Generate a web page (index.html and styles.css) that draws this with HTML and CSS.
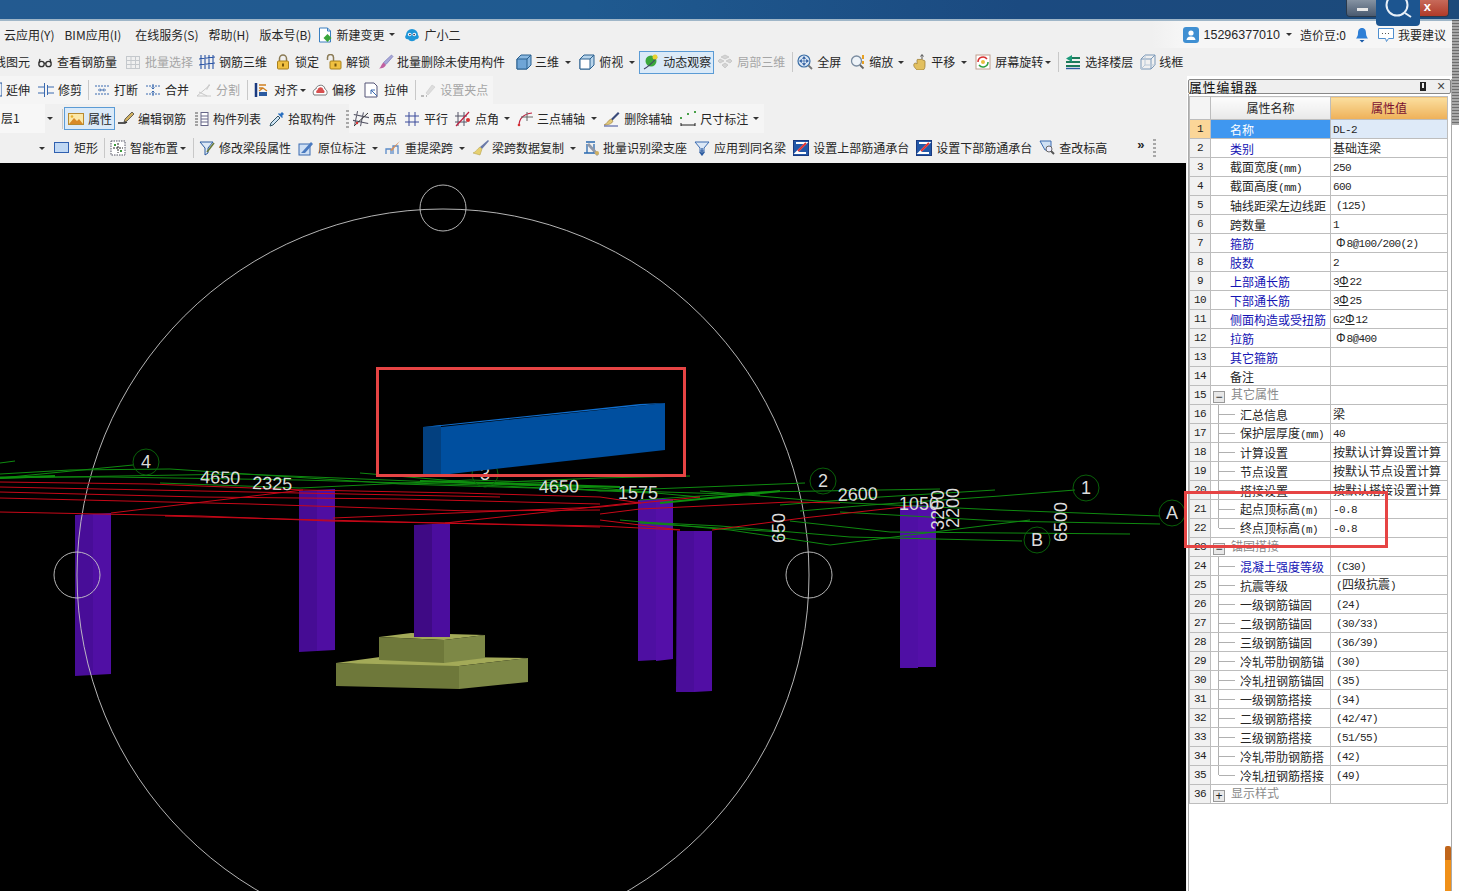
FILE: index.html
```html
<!DOCTYPE html>
<html lang="zh-CN">
<head>
<meta charset="utf-8">
<title>属性编辑器</title>
<link rel="stylesheet" href="styles.css">
</head>
<body>
<svg class="defs" aria-hidden="true">
  <symbol id="i-doc" viewBox="0 0 16 16"><path d="M2.500 1h8l3 3v11h-11z" fill="#fff" stroke="#3a7fc0"/><path d="M10.500 1v3h3" fill="none" stroke="#3a7fc0"/><path d="M10.500 7l4 4-4 4-4-4z" fill="#3aa53a"/></symbol>
  <symbol id="i-bot" viewBox="0 0 16 16"><path d="M2 8a6 6 0 0 1 12 0c2 2 0 5-2 4-2 3-6 3-8 0-2 1-4-2-2-4z" fill="#1f96d8"/><circle cx="5.700" cy="7.500" r="1.800" fill="#fff"/><circle cx="10.300" cy="7.500" r="1.800" fill="#fff"/><circle cx="5.900" cy="7.600" r=".8" fill="#113"/><circle cx="10.100" cy="7.600" r=".8" fill="#113"/></symbol>
  <symbol id="i-user" viewBox="0 0 16 16"><rect width="16" height="16" rx="3" fill="#3f8fd2"/><circle cx="8" cy="6" r="2.600" fill="#fff"/><path d="M3.500 13c.5-3 2.500-3.500 4.500-3.500s4 .5 4.500 3.500z" fill="#fff"/></symbol>
  <symbol id="i-bell" viewBox="0 0 16 16"><path d="M8 1c3 0 4 2.500 4 5 0 3 1 4 2 5.500H2C3 10 4 9 4 6c0-2.500 1-5 4-5z" fill="#2e7fd6"/><path d="M5.500 13h5L8 15.500z" fill="#1a5aa8"/></symbol>
  <symbol id="i-chat" viewBox="0 0 16 16"><path d="M.5 1.500h15v10h-5l-2 3-1-3h-7z" fill="#fff" stroke="#4f8fd0"/><path d="M4 6.500h8" stroke="#555" stroke-dasharray="1 2"/></symbol>
  <symbol id="i-glass" viewBox="0 0 16 16"><g fill="none" stroke="#333" stroke-width="1.300"><circle cx="4.500" cy="10" r="2.700"/><circle cx="11.500" cy="10" r="2.700"/><path d="M7 9.500c.7-.6 1.300-.6 2 0M2 9l1-4M14 9l-1-4"/></g></symbol>
  <symbol id="i-gridg" viewBox="0 0 16 16"><g fill="none" stroke="#c4c8cc"><rect x="1.500" y="2.500" width="13" height="12"/><path d="M1.500 6.500h13M1.500 10.500h13M6 2.500v12M10.500 2.500v12"/></g></symbol>
  <symbol id="i-rebar" viewBox="0 0 16 16"><g fill="none" stroke="#2b55a5" stroke-width="1.100"><path d="M2 1v14M6 1v14M10 1v14M14 1v14M0 5l16-2M0 11l16-2"/></g></symbol>
  <symbol id="i-lock" viewBox="0 0 16 16"><path d="M4.500 7V4.500a3.500 3.500 0 0 1 7 0V7" fill="none" stroke="#8a7a55" stroke-width="1.500"/><rect x="2.500" y="7" width="11" height="8" rx="1" fill="#f0c040" stroke="#a8801c"/><rect x="7" y="9.500" width="2" height="3" fill="#75550c"/></symbol>
  <symbol id="i-unlock" viewBox="0 0 16 16"><path d="M1.500 6V3.500a3 3 0 0 1 6 0V7" fill="none" stroke="#8a7a55" stroke-width="1.500"/><rect x="4" y="7" width="11" height="8" rx="1" fill="#f0c040" stroke="#a8801c"/><rect x="8.500" y="9.500" width="2" height="3" fill="#75550c"/></symbol>
  <symbol id="i-brush" viewBox="0 0 16 16"><path d="M13.500 1l1.500 1.500-7 8-2.500-2z" fill="#a8a8d8" stroke="#6a6ab0" stroke-width=".6"/><path d="M5.500 8.500l2.500 2.500c-1 2.500-4 3.500-7 3.500 2-1 2-4 4.500-6z" fill="#c060a0"/></symbol>
  <symbol id="i-cube" viewBox="0 0 16 16"><path d="M1 5l4-4h10v10l-4 4H1z" fill="#8ab8e0" stroke="#2a6090"/><path d="M1 5h10v10H1z" fill="#6fa5d6" stroke="#2a6090"/><path d="M11 5l4-4" stroke="#2a6090"/></symbol>
  <symbol id="i-cubew" viewBox="0 0 16 16"><path d="M1 5l4-4h10v10l-4 4H1z" fill="#b8d4ea" stroke="#2a6090"/><path d="M1 5h10v10H1z" fill="#fff" stroke="#2a6090"/><path d="M11 5l4-4" stroke="#2a6090"/></symbol>
  <symbol id="i-orbit" viewBox="0 0 16 16"><circle cx="8" cy="7" r="5.500" fill="#3ca83c"/><path d="M1 15c2-1 9-6 13-12" fill="none" stroke="#446" stroke-width="1.200"/><circle cx="12" cy="3" r="2.500" fill="#e8d030"/></symbol>
  <symbol id="i-part" viewBox="0 0 16 16"><g fill="#d4d4d4" stroke="#bbb" stroke-width=".6"><path d="M8 1l4 2-4 2-4-2zM3 5l4 2-4 2-2-2zM13 5l2 2-2 2-4-2zM8 9l3 2-3 3-3-3z"/></g></symbol>
  <symbol id="i-full" viewBox="0 0 16 16"><circle cx="7" cy="7" r="6" fill="#dce8f6" stroke="#3b6ea5" stroke-width="1.200"/><path d="M7 3v8M3 7h8M7 2.500l-1.500 2h3zM7 11.500l-1.500-2h3zM2.500 7l2-1.500v3zM11.500 7l-2-1.500v3z" fill="#2a5aa0" stroke="#2a5aa0" stroke-width=".6"/><path d="M11.500 11.500L15 15" stroke="#777" stroke-width="1.800"/></symbol>
  <symbol id="i-zoom" viewBox="0 0 16 16"><circle cx="6.500" cy="7" r="5" fill="#eef3f8" stroke="#7a8ca0" stroke-width="1.300"/><path d="M10 11l3.500 3.500" stroke="#666" stroke-width="1.800"/><path d="M13 1v4M13 7v3" stroke="#e8a020" stroke-width="2"/></symbol>
  <symbol id="i-pan" viewBox="0 0 16 16"><path d="M5 16c-2-2-4-4-3-6s3 0 3 0V6c0-1 2-1 2 0 0-1 2-1 2 0 0-1 2-1 2 .5 1-.5 2 0 2 1V12c0 2-1 4-2 4z" fill="#e2c060" stroke="#94742c" stroke-width=".7"/><path d="M10 1v4M8.500 2.500L10 .5l1.500 2" fill="none" stroke="#555"/></symbol>
  <symbol id="i-rot" viewBox="0 0 16 16"><rect x="1" y="1" width="14" height="14" fill="#fff" stroke="#c0a090"/><path d="M3 8a5 5 0 0 1 9-3" fill="none" stroke="#d83030" stroke-width="1.500"/><path d="M13 8a5 5 0 0 1-9 3" fill="none" stroke="#30a040" stroke-width="1.500"/><circle cx="8" cy="8" r="2" fill="#e8c040"/></symbol>
  <symbol id="i-floor" viewBox="0 0 16 16"><path d="M5 4h10M1 8h14M1 12h14" stroke="#1c7a5a" stroke-width="2"/><path d="M7 1L1 4.500 7 8z" fill="#1c9a7a"/><path d="M1 14.500h14" stroke="#2a5aa0" stroke-width="1.400"/></symbol>
  <symbol id="i-wire" viewBox="0 0 16 16"><g fill="none" stroke="#7a98b8"><path d="M1 5h10v10H1zM1 5l4-4h10v10l-4 4M11 5l4-4"/><path d="M5 1v10h10M5 11l-4 4" stroke="#b8c8d8"/></g></symbol>
  <symbol id="i-ext" viewBox="0 0 16 16"><rect x="13" y="1" width="3" height="13" fill="#e8eef6" stroke="#2a5aa0"/></symbol>
  <symbol id="i-trim" viewBox="0 0 16 16"><path d="M0 5h6M0 11h6M10 5h6M10 11h6" stroke="#3a6ab0"/><path d="M6.500 1v14M9.500 3v10" stroke="#3a6ab0"/></symbol>
  <symbol id="i-brk" viewBox="0 0 16 16"><path d="M1 4h14M1 12h14" stroke="#3a6ab0" stroke-dasharray="2 1"/><path d="M4 8h3M9 8h3M6 6.500L7.500 8 6 9.500M10 6.500L8.500 8 10 9.500" fill="none" stroke="#3a6ab0"/></symbol>
  <symbol id="i-mrg" viewBox="0 0 16 16"><path d="M1 4h14M1 12h14" stroke="#3a6ab0" stroke-dasharray="2 1"/><path d="M8 7V2M8 9v5M6.500 5.500L8 7l1.500-1.500M6.500 10.500L8 9l1.500 1.500" fill="none" stroke="#3a6ab0"/></symbol>
  <symbol id="i-spl" viewBox="0 0 16 16"><path d="M1 14L14 3M1 14h14M3 10l8 4" fill="none" stroke="#c8c8c8"/><path d="M10 7l3-5 1 1-3 5z" fill="#ccc"/></symbol>
  <symbol id="i-ali" viewBox="0 0 16 16"><path d="M2 1v14" stroke="#1a3a80" stroke-width="2.500"/><path d="M5 3h7M5 6h4M5 9l4-3 4 3" fill="none" stroke="#d08020" stroke-width="1.300"/><rect x="5" y="10" width="8" height="4" fill="#2a5aa0"/></symbol>
  <symbol id="i-off" viewBox="0 0 16 16"><path d="M2 13c-2-3 0-6 2-6 0-4 8-6 9 0 2 1 3 4 1 6z" fill="#fff" stroke="#777"/><path d="M4.500 11c-1-2 .5-3 1-3 .5-3 5-4 6 0 1 .5 1.500 2 .5 3z" fill="#d85050"/></symbol>
  <symbol id="i-str" viewBox="0 0 16 16"><path d="M1 1h9l3 3v11H1z" fill="#fff" stroke="#557"/><path d="M7 8l6 6M7 12V8h4" fill="none" stroke="#3a6ab0"/></symbol>
  <symbol id="i-grip2" viewBox="0 0 16 16"><path d="M12 3l3 2-7 8-2-2z" fill="#ddd" stroke="#c4c4c4" stroke-width=".5"/><path d="M1 14h3M6 14h1" stroke="#bbb" stroke-width="2"/></symbol>
  <symbol id="i-attr" viewBox="0 0 16 16"><rect x=".5" y="2.500" width="15" height="11" fill="#fbe8a8" stroke="#b88a30"/><path d="M1 13l5-6 3 3 2-2 4 5z" fill="#d88a28"/><circle cx="4" cy="5.500" r="1.300" fill="#e8b030"/></symbol>
  <symbol id="i-edit" viewBox="0 0 16 16"><path d="M0 12h7l2-1" fill="none" stroke="#222" stroke-width="1.300"/><path d="M14 1l2 2-7 7-3 1 1-3z" fill="#d0b060" stroke="#333" stroke-width=".7"/></symbol>
  <symbol id="i-list" viewBox="0 0 16 16"><path d="M1 2h3M1 5h3M1 8h3M1 11h3M1 14h3" stroke="#888" stroke-width="1.400"/><rect x="7" y="1.500" width="7" height="13" fill="#fff" stroke="#668"/><path d="M7 5h7M7 8h7M7 11h7" stroke="#668"/></symbol>
  <symbol id="i-pick" viewBox="0 0 16 16"><path d="M1 15l1-3 7-7 2 2-7 7z" fill="#cfe4f4" stroke="#356"/><path d="M9 3l4 4 1-1-1-1 2-2-2-2-2 2-1-1z" fill="#2a70c0"/></symbol>
  <symbol id="i-two" viewBox="0 0 16 16"><path d="M3 1v14M9 1v14M0 5h16M0 11h16" stroke="#556" transform="rotate(12 8 8)"/><path d="M1 15L15 2" stroke="#333"/><circle cx="4" cy="12" r="1.200" fill="#d83030"/></symbol>
  <symbol id="i-par" viewBox="0 0 16 16"><path d="M5 1v14M11 1v14M1 5h14M1 11h14" stroke="#3a4a9a"/></symbol>
  <symbol id="i-ang" viewBox="0 0 16 16"><path d="M3 1v14M9 1v14M0 5h12M0 11h12" stroke="#556"/><path d="M1 15L14 1" stroke="#c02040" stroke-width="1.200"/><circle cx="13" cy="9" r="2" fill="#d83030"/></symbol>
  <symbol id="i-arc" viewBox="0 0 16 16"><path d="M2 15C2 7 7 3 15 2" fill="none" stroke="#c02040" stroke-width="1.200"/><path d="M10 1v9M4 6h12" stroke="#666"/><circle cx="2" cy="14" r="1.300" fill="#d83030"/></symbol>
  <symbol id="i-del" viewBox="0 0 16 16"><path d="M14 1l1.500 1.500-7 7L7 8z" fill="#3a4a7a"/><path d="M7 8l2 2c-1 3-5 4-9 4 3-1 4-5 7-6z" fill="#e0c878" stroke="#8a6a2a" stroke-width=".5"/><path d="M0 15h14" stroke="#3a4a9a"/></symbol>
  <symbol id="i-dim" viewBox="0 0 16 16"><path d="M1 12v3M15 12v3M1 14h14" stroke="#222"/><rect x="0" y="6" width="2" height="2" fill="#48a048"/><rect x="7" y="2" width="2" height="2" fill="#48a048"/><rect x="14" y="0" width="2" height="2" fill="#48a048"/></symbol>
  <symbol id="i-rect" viewBox="0 0 16 16"><rect x=".5" y="2.500" width="14" height="10" fill="#c0d8f4" stroke="#3060b0"/></symbol>
  <symbol id="i-smart" viewBox="0 0 16 16"><rect x="1" y="1" width="14" height="14" fill="#fff" stroke="#556" stroke-dasharray="1.500 1"/><path d="M8 3v10M3 8h10" stroke="#222" stroke-dasharray="2 1"/><path d="M4 4h2v2H4zM10 10h2v2h-2z" fill="#3a9a3a"/></symbol>
  <symbol id="i-mod" viewBox="0 0 16 16"><path d="M1 2h13L9 8v5l-3 2V8z" fill="#dce8f6" stroke="#2a5aa0"/><path d="M15 3L8 12" stroke="#6a7a3a" stroke-width="1.600"/></symbol>
  <symbol id="i-org" viewBox="0 0 16 16"><rect x="1" y="4" width="11" height="11" fill="#cfe0f4" stroke="#3a6ab0"/><path d="M3 13l2-2 8-9 2 2-8 9z" fill="#4a7ac0"/></symbol>
  <symbol id="i-re" viewBox="0 0 16 16"><path d="M1 14V9h5v5M8 14V6h5v8" fill="none" stroke="#5a8ac8" stroke-width="1.300"/><path d="M15 1L5 10l2 1z" fill="#d8905a"/></symbol>
  <symbol id="i-cp" viewBox="0 0 16 16"><path d="M15 0l1 1-7 8-2-2z" fill="#6a7aa8"/><path d="M7 7l2 2-2 6-7-2c3-1 4-4 7-6z" fill="#e6d070" stroke="#b09a40" stroke-width=".5"/></symbol>
  <symbol id="i-bat" viewBox="0 0 16 16"><path d="M2 2h9M3 4v9M10 4v9M0 13h13" stroke="#2a6ab0" fill="none" stroke-width="1.300"/><path d="M5 3l10 11-2 2L3 5z" fill="#9098a8"/><circle cx="13" cy="13" r="2" fill="#d0b060"/></symbol>
  <symbol id="i-app" viewBox="0 0 16 16"><path d="M1 2h14L10 8v3H6V8z" fill="#dce8f6" stroke="#3a6ab0"/><path d="M8 8v6M5.500 11.500L8 15l2.500-3.500" fill="none" stroke="#2a5aa0" stroke-width="1.300"/></symbol>
  <symbol id="i-z" viewBox="0 0 16 16"><rect x=".5" y=".5" width="15" height="15" fill="#2358a8" stroke="#1a3a80"/><path d="M3 3h10L3 13h10" fill="none" stroke="#fff" stroke-width="2"/><path d="M5 11L13 3" stroke="#e03030" stroke-width="2"/></symbol>
  <symbol id="i-qry" viewBox="0 0 16 16"><path d="M1 1h11v9H6z" fill="#cfe0f4" stroke="#3a6ab0"/><circle cx="10" cy="9" r="3" fill="#eef" stroke="#666"/><path d="M12 11l3 3" stroke="#555" stroke-width="2"/></symbol>
</svg>

<header class="titlebar">
  <div class="winctl"><span class="wmin"></span><span class="wclose">x</span></div>
</header>
<div class="search"><svg class="search-ic" viewBox="0 0 44 26"><circle cx="21" cy="5" r="10.500" fill="none" stroke="#e8f0f8" stroke-width="2"/><path d="M29 13l6 4" stroke="#e8f0f8" stroke-width="2"/></svg></div>

<nav class="row menu">
  <span class="mi m4">云应用(Y)</span><span class="mi">BIM应用(I)</span><span class="mi m14">在线服务(S)</span><span class="mi">帮助(H)</span><span class="mi">版本号(B)</span>
  <span class="tb m6 t3"><svg class="ic"><use href="#i-doc"/></svg>新建变更</span><i class="caret m5"></i>
  <span class="tb m9"><svg class="ic"><use href="#i-bot"/></svg>广小二</span>
  <div class="menu-r">
    <svg class="ic"><use href="#i-user"/></svg><span class="phone">15296377010</span><i class="caret m6"></i>
    <span class="mi m8">造价豆:0</span>
    <svg class="ic m8"><use href="#i-bell"/></svg><svg class="ic m8"><use href="#i-chat"/></svg><span class="mi m4">我要建议</span>
  </div>
</nav>

<div class="row r2">
  <span class="tb mn6">线图元</span>
  <span class="tb m7"><svg class="ic"><use href="#i-glass"/></svg>查看钢筋量</span>
  <span class="tb m8 off"><svg class="ic"><use href="#i-gridg"/></svg>批量选择</span>
  <span class="tb m6"><svg class="ic"><use href="#i-rebar"/></svg>钢筋三维</span>
  <span class="tb m8"><svg class="ic"><use href="#i-lock"/></svg>锁定</span>
  <span class="tb m7"><svg class="ic"><use href="#i-unlock"/></svg>解锁</span>
  <span class="tb m8 t3"><svg class="ic"><use href="#i-brush"/></svg>批量删除未使用构件</span>
  <span class="tb m11 t3"><svg class="ic"><use href="#i-cube"/></svg>三维</span><i class="caret m6"></i>
  <span class="tb m8"><svg class="ic"><use href="#i-cubew"/></svg>俯视</span><i class="caret m6"></i>
  <span class="tb m4 on"><svg class="ic"><use href="#i-orbit"/></svg>动态观察</span>
  <span class="tb m3 off"><svg class="ic"><use href="#i-part"/></svg>局部三维</span>
  <i class="sep m7"></i>
  <span class="tb m4"><svg class="ic"><use href="#i-full"/></svg>全屏</span>
  <span class="tb m9 t3"><svg class="ic"><use href="#i-zoom"/></svg>缩放</span><i class="caret m5"></i>
  <span class="tb m8 t3"><svg class="ic"><use href="#i-pan"/></svg>平移</span><i class="caret m6"></i>
  <span class="tb m8"><svg class="ic"><use href="#i-rot"/></svg>屏幕旋转</span><i class="caret m2"></i>
  <i class="sep m7"></i>
  <span class="tb m6"><svg class="ic"><use href="#i-floor"/></svg>选择楼层</span>
  <span class="tb m7 t3"><svg class="ic"><use href="#i-wire"/></svg>线框</span>
</div>

<main class="work">
  <div class="left">
    <div class="row r3">
      <div class="grp">
        <span class="tb mn14"><svg class="ic"><use href="#i-ext"/></svg>延伸</span>
        <span class="tb m8"><svg class="ic"><use href="#i-trim"/></svg>修剪</span>
        <i class="sep m6"></i>
        <span class="tb m5"><svg class="ic"><use href="#i-brk"/></svg>打断</span>
        <span class="tb m7"><svg class="ic"><use href="#i-mrg"/></svg>合并</span>
        <span class="tb m7 off"><svg class="ic"><use href="#i-spl"/></svg>分割</span>
        <i class="sep m7"></i>
        <span class="tb m6"><svg class="ic"><use href="#i-ali"/></svg>对齐</span><i class="caret m2"></i>
        <span class="tb m6"><svg class="ic"><use href="#i-off"/></svg>偏移</span>
        <span class="tb m8"><svg class="ic"><use href="#i-str"/></svg>拉伸</span>
        <i class="sep m7"></i>
        <span class="tb m4 off"><svg class="ic"><use href="#i-grip2"/></svg>设置夹点</span>
      </div>
    </div>
    <div class="row r4">
      <span class="combo">层1</span><i class="caret m2"></i><i class="sep m9"></i>
      <span class="tb m1 on"><svg class="ic"><use href="#i-attr"/></svg>属性</span>
      <span class="tb m3"><svg class="ic"><use href="#i-edit"/></svg>编辑钢筋</span>
      <span class="tb m8 t3"><svg class="ic"><use href="#i-list"/></svg>构件列表</span>
      <span class="tb m8 t3"><svg class="ic"><use href="#i-pick"/></svg>拾取构件</span>
      <i class="grip m10"></i>
      <div class="grp g4">
        <span class="tb m4"><svg class="ic"><use href="#i-two"/></svg>两点</span>
        <span class="tb m7"><svg class="ic"><use href="#i-par"/></svg>平行</span>
        <span class="tb m7"><svg class="ic"><use href="#i-ang"/></svg>点角</span><i class="caret m5"></i>
        <span class="tb m7"><svg class="ic"><use href="#i-arc"/></svg>三点辅轴</span><i class="caret m6"></i>
        <span class="tb m7"><svg class="ic"><use href="#i-del"/></svg>删除辅轴</span>
        <span class="tb m8"><svg class="ic"><use href="#i-dim"/></svg>尺寸标注</span><i class="caret m5"></i>
      </div>
    </div>
    <div class="row r5">
      <i class="caret m39"></i>
      <span class="tb m9"><svg class="ic"><use href="#i-rect"/></svg>矩形</span>
      <i class="sep m6"></i>
      <span class="tb m5"><svg class="ic"><use href="#i-smart"/></svg>智能布置</span><i class="caret m2"></i>
      <i class="sep m7"></i>
      <span class="tb m5"><svg class="ic"><use href="#i-mod"/></svg>修改梁段属性</span>
      <span class="tb m7"><svg class="ic"><use href="#i-org"/></svg>原位标注</span><i class="caret m6"></i>
      <span class="tb m7"><svg class="ic"><use href="#i-re"/></svg>重提梁跨</span><i class="caret m6"></i>
      <span class="tb m8 t3"><svg class="ic"><use href="#i-cp"/></svg>梁跨数据复制</span><i class="caret m6"></i>
      <span class="tb m8 t3"><svg class="ic"><use href="#i-bat"/></svg>批量识别梁支座</span>
      <span class="tb m7"><svg class="ic"><use href="#i-app"/></svg>应用到同名梁</span>
      <span class="tb m7"><svg class="ic"><use href="#i-z"/></svg>设置上部筋通承台</span>
      <span class="tb m7"><svg class="ic"><use href="#i-z"/></svg>设置下部筋通承台</span>
      <span class="tb m7"><svg class="ic"><use href="#i-qry"/></svg>查改标高</span>
      <span class="more">»</span>
      <i class="grip m9"></i>
    </div>

    <svg class="canvas" viewBox="0 163 1186 728">
      <g>
        <path d="M75 515l18-1v161l-18 1z" fill="#480d98"/><path d="M93 514l18-1v161l-18 1z" fill="#500fa4"/>
        <path d="M299 491l18-1v161l-18 1z" fill="#460c94"/><path d="M317 490l18-1v161l-18 1z" fill="#4f0ea2"/>
        <path d="M638 500l18-1v161l-18 1z" fill="#4e0fa2"/><path d="M656 499l17 0v160l-17 2z" fill="#540fa8"/>
        <path d="M677 531l17 0v161l-18 0z" fill="#4a0d9a"/><path d="M694 531l18 0v160l-18 1z" fill="#510ea4"/>
        <path d="M900 507l18-2v163l-18 0z" fill="#4f0fa4"/><path d="M918 505l18 1v161l-18 0z" fill="#540fa9"/>
      </g>
      <g class="foot">
        <path d="M336 663l44-6 80 0 68 1-69 8-59 0z" fill="#a3aa58"/>
        <path d="M336 663l123 3v23l-123-3z" fill="#6e783a"/>
        <path d="M459 666l69-8v24l-69 7z" fill="#7d8846"/>
        <path d="M379 637l32-4 74 2-41 5z" fill="#a3aa58"/>
        <path d="M379 637l65 3v23l-65-3z" fill="#6e783a"/>
        <path d="M444 640l41-5v23l-41 5z" fill="#7d8846"/>
      </g>
      <path d="M414 525l18-1v113h-18z" fill="#3f0a85"/><path d="M432 524l18-1v114h-18z" fill="#4b0d9e"/>
      <g class="orbit">
        <circle cx="443" cy="575" r="366"/>
        <circle cx="443" cy="208" r="23"/>
        <circle cx="77" cy="575" r="23"/>
        <circle cx="809" cy="575" r="23"/>
      </g>
      <g class="grn">
        <path d="M133 465L0 478M15 461L0 463"/>
        <path d="M0 474L70 470L170 469L400 484L600 490L760 495"/>
        <path d="M0 477L110 477L300 480L480 485L650 493"/>
        <path d="M0 478L240 474L460 483L600 488L700 497"/>
        <path d="M160 483L300 488L470 480L560 483"/>
        <path d="M360 473L480 483L600 478L690 476"/>
        <path d="M805 483L600 491L540 485"/>
        <path d="M640 500L760 492L940 489"/>
        <path d="M1075 490L1000 496L870 505L800 511"/>
        <path d="M995 490L880 497L780 505"/>
        <path d="M1160 516L1000 510L830 502L700 491"/>
        <path d="M1160 524L1000 521L840 512"/>
        <path d="M1130 534L890 532L790 521"/>
        <path d="M1022 541L850 537L720 526L640 522"/>
        <path d="M1030 520L830 545L730 530L620 520"/>
        <path d="M640 523L780 532"/>
        <path d="M420 481L620 487" class="thick"/>
        <path d="M780 491L660 503" class="thick"/>
        <path d="M0 478L55 476" class="thick"/>
      </g>
      <g class="red">
        <path d="M0 482L150 484L303 490L460 493L600 497L641 503"/>
        <path d="M0 492L200 497L400 499L600 504"/>
        <path d="M0 498L250 504L470 511L600 510"/>
        <path d="M0 512L200 516L330 521L600 526L680 530"/>
        <path d="M0 487L300 493L500 497"/>
        <path d="M111 513L303 490"/>
        <path d="M333 518L600 507L700 497"/>
        <path d="M445 523L640 502"/>
        <path d="M165 516L600 527"/>
        <path d="M600 514L640 509L790 502L840 503"/>
        <path d="M712 530L803 518L912 506"/>
        <path d="M600 520L680 530"/>
      </g>
      <g class="axis">
        <circle cx="146" cy="462" r="13"/><circle cx="485" cy="474" r="13"/><circle cx="823" cy="481" r="13"/>
        <circle cx="1086" cy="488" r="13"/><circle cx="1172" cy="513" r="13"/><circle cx="1037" cy="540" r="13"/>
      </g>
      <g class="lbl">
        <text x="141" y="468">4</text><text x="480" y="480">3</text><text x="818" y="487">2</text>
        <text x="1081" y="494">1</text><text x="1166" y="519">A</text><text x="1031" y="546">B</text>
        <text x="200" y="483" transform="rotate(2 200 483)">4650</text>
        <text x="252" y="489" transform="rotate(2 252 489)">2325</text>
        <text x="539" y="493" transform="rotate(-1 539 493)">4650</text>
        <text x="618" y="499">1575</text>
        <text x="838" y="501" transform="rotate(-2 838 501)">2600</text>
        <text x="899" y="510">1050</text>
        <text x="785" y="543" transform="rotate(-90 785 543)">650</text>
        <text x="959" y="528" transform="rotate(-90 959 528)">2200</text>
        <text x="944" y="530" transform="rotate(-90 944 530)">3200</text>
        <text x="1067" y="542" transform="rotate(-90 1067 542)">6500</text>
      </g>
      <path d="M423 427l18-2v50h-18z" fill="#03407f"/>
      <path d="M441 427l224-24v47l-224 25z" fill="#004f9f"/>
      <path d="M423 427l217-23 25-1-224 23z" fill="#0f6fd0"/>
      <rect class="mark" x="377.500" y="368.500" width="307" height="107"/>
    </svg>
  </div>

  <aside class="panel">
    <div class="ptitle"><span class="pname">属性编辑器</span><span class="pin"></span><span class="pclose">×</span></div>
    <table class="grid">
      <colgroup><col class="c0"><col class="c1"><col class="c2"></colgroup>
      <thead><tr><th></th><th>属性名称</th><th class="hv">属性值</th></tr></thead>
      <tbody>
        <tr class="sel"><td>1</td><td class="k"><b class="in0">名称</b></td><td class="v"><span class="a">DL-2</span></td></tr>
        <tr><td>2</td><td class="k blue"><b class="in0">类别</b></td><td class="v">基础连梁</td></tr>
        <tr><td>3</td><td class="k"><b class="in0">截面宽度<span class="a">(mm)</span></b></td><td class="v"><span class="a">250</span></td></tr>
        <tr><td>4</td><td class="k"><b class="in0">截面高度<span class="a">(mm)</span></b></td><td class="v"><span class="a">600</span></td></tr>
        <tr><td>5</td><td class="k"><b class="in0">轴线距梁左边线距</b></td><td class="v p"><span class="a">(125)</span></td></tr>
        <tr><td>6</td><td class="k"><b class="in0">跨数量</b></td><td class="v"><span class="a">1</span></td></tr>
        <tr><td>7</td><td class="k blue"><b class="in0">箍筋</b></td><td class="v p"><span class="a"><i class="phi">Φ</i>8@100/200(2)</span></td></tr>
        <tr><td>8</td><td class="k blue"><b class="in0">肢数</b></td><td class="v"><span class="a">2</span></td></tr>
        <tr><td>9</td><td class="k blue"><b class="in0">上部通长筋</b></td><td class="v"><span class="a">3<u class="phi">Φ</u>22</span></td></tr>
        <tr><td>10</td><td class="k blue"><b class="in0">下部通长筋</b></td><td class="v"><span class="a">3<u class="phi">Φ</u>25</span></td></tr>
        <tr><td>11</td><td class="k blue"><b class="in0">侧面构造或受扭筋</b></td><td class="v"><span class="a">G2<u class="phi">Φ</u>12</span></td></tr>
        <tr><td>12</td><td class="k blue"><b class="in0">拉筋</b></td><td class="v p"><span class="a"><i class="phi">Φ</i>8@400</span></td></tr>
        <tr><td>13</td><td class="k blue"><b class="in0">其它箍筋</b></td><td class="v"></td></tr>
        <tr><td>14</td><td class="k"><b class="in0">备注</b></td><td class="v"></td></tr>
        <tr><td>15</td><td class="k gr"><i class="box">−</i>其它属性</td><td class="v"></td></tr>
        <tr><td>16</td><td class="k t"><b class="in1">汇总信息</b></td><td class="v">梁</td></tr>
        <tr><td>17</td><td class="k t"><b class="in1">保护层厚度<span class="a">(mm)</span></b></td><td class="v"><span class="a">40</span></td></tr>
        <tr><td>18</td><td class="k t"><b class="in1">计算设置</b></td><td class="v">按默认计算设置计算</td></tr>
        <tr><td>19</td><td class="k t"><b class="in1">节点设置</b></td><td class="v">按默认节点设置计算</td></tr>
        <tr><td>20</td><td class="k t"><b class="in1">搭接设置</b></td><td class="v">按默认搭接设置计算</td></tr>
        <tr><td>21</td><td class="k t"><b class="in1">起点顶标高<span class="a">(m)</span></b></td><td class="v"><span class="a">-0.8</span></td></tr>
        <tr><td>22</td><td class="k t last"><b class="in1">终点顶标高<span class="a">(m)</span></b></td><td class="v"><span class="a">-0.8</span></td></tr>
        <tr><td>23</td><td class="k gr"><i class="box">−</i>锚固搭接</td><td class="v"></td></tr>
        <tr><td>24</td><td class="k t blue"><b class="in1">混凝土强度等级</b></td><td class="v p"><span class="a">(C30)</span></td></tr>
        <tr><td>25</td><td class="k t"><b class="in1">抗震等级</b></td><td class="v p"><span class="a">(</span>四级抗震<span class="a">)</span></td></tr>
        <tr><td>26</td><td class="k t"><b class="in1">一级钢筋锚固</b></td><td class="v p"><span class="a">(24)</span></td></tr>
        <tr><td>27</td><td class="k t"><b class="in1">二级钢筋锚固</b></td><td class="v p"><span class="a">(30/33)</span></td></tr>
        <tr><td>28</td><td class="k t"><b class="in1">三级钢筋锚固</b></td><td class="v p"><span class="a">(36/39)</span></td></tr>
        <tr><td>29</td><td class="k t"><b class="in1">冷轧带肋钢筋锚</b></td><td class="v p"><span class="a">(30)</span></td></tr>
        <tr><td>30</td><td class="k t"><b class="in1">冷轧扭钢筋锚固</b></td><td class="v p"><span class="a">(35)</span></td></tr>
        <tr><td>31</td><td class="k t"><b class="in1">一级钢筋搭接</b></td><td class="v p"><span class="a">(34)</span></td></tr>
        <tr><td>32</td><td class="k t"><b class="in1">二级钢筋搭接</b></td><td class="v p"><span class="a">(42/47)</span></td></tr>
        <tr><td>33</td><td class="k t"><b class="in1">三级钢筋搭接</b></td><td class="v p"><span class="a">(51/55)</span></td></tr>
        <tr><td>34</td><td class="k t"><b class="in1">冷轧带肋钢筋搭</b></td><td class="v p"><span class="a">(42)</span></td></tr>
        <tr><td>35</td><td class="k t last"><b class="in1">冷轧扭钢筋搭接</b></td><td class="v p"><span class="a">(49)</span></td></tr>
        <tr><td>36</td><td class="k gr"><i class="box">+</i>显示样式</td><td class="v"></td></tr>
      </tbody>
    </table>
    <span class="thumb"></span>
  </aside>
</main>
<div class="strip"></div>
<div class="callout"></div>
</body>
</html>
```
FILE: styles.css
```css
* { box-sizing: border-box; }
html, body { margin: 0; padding: 0; }
body {
  position: relative;
  width: 1459px;
  height: 891px;
  overflow: hidden;
  background: #f0f0f0;
  color: #262626;
  font: 12px/16px "Noto Sans CJK SC", "Liberation Sans", sans-serif;
}
.defs { position: absolute; width: 0; height: 0; }

.titlebar {
  height: 21px;
  display: flex;
  justify-content: flex-end;
  padding-right: 10px;
  background: linear-gradient(90deg, #235a90 0%, #1f5a90 40%, #1b4a80 70%, #1c4a7a 100%);
  border-bottom: 2px solid #9fb6c8;
}
.winctl {
  display: flex;
  width: 103px;
  height: 17px;
  border: 1px solid #2a3a4c;
  border-top: 0;
  border-radius: 0 0 4px 4px;
  overflow: hidden;
}
.wmin { width: 58px; background: linear-gradient(#8592a2, #4a5a70); position: relative; }
.wmin::after { content: ""; position: absolute; left: 10px; top: 8px; width: 11px; height: 3px; background: #e8e8e8; }
.wclose {
  flex: 1;
  background: linear-gradient(#c76a5a, #b03a28);
  color: #fff;
  font: bold 13px/13px "Liberation Sans", sans-serif;
  text-align: right;
  padding-right: 17px;
}
.search {
  position: absolute;
  left: 1376px;
  top: 0;
  width: 44px;
  height: 26px;
  background: #1c5590;
  border-radius: 0 0 4px 4px;
}
.search-ic { display: block; width: 44px; height: 26px; }

.row { display: flex; align-items: center; white-space: nowrap; background: #f0f0f0; }
.menu { height: 27px; }
.menu-r {
  margin-left: auto;
  display: flex;
  align-items: center;
  height: 27px;
  padding: 0 13px 0 31px;
  background: linear-gradient(90deg, #f0f0f0, #f6f6f6 30px);
}
.phone { margin-left: 5px; font: 12.5px/16px "Liberation Sans", sans-serif; }
.r2 { height: 28px; }
.r3 { height: 28px; }
.r4 { height: 29px; }
.r5 { height: 30px; }

.mi { margin-left: 10px; }
.tb { display: inline-flex; align-items: center; gap: 4px; flex: none; }
.tb.t3 { gap: 3px; }
.ic { display: block; width: 16px; height: 16px; flex: none; }
.off { color: #a6a6a6; }
.on {
  height: 23px;
  padding: 0 2px 0 3px;
  border: 1px solid #5b9bd5;
  background: #dbeaf8;
}
.caret {
  flex: none;
  width: 0;
  height: 0;
  border-left: 3px solid transparent;
  border-right: 3px solid transparent;
  border-top: 3px solid #333;
}
.sep { flex: none; width: 1px; height: 20px; background: #c8c8c8; }
.grip { flex: none; width: 3px; height: 18px; background: repeating-linear-gradient(#a8a8a8 0 2px, transparent 2px 4px); }
.grp { display: flex; align-items: center; height: 100%; padding-right: 5px; background: #f5f5f5; }
.g4 { margin-left: 0; }
.combo { flex: none; width: 45px; height: 100%; padding-left: 1px; background: #f7f7f7; line-height: 27px; }
.more { flex: none; margin: -8px 0 0 30px; font: bold 13px/13px "Liberation Sans", sans-serif; }

.m1 { margin-left: 1px; } .m2 { margin-left: 2px; } .m3 { margin-left: 3px; } .m4 { margin-left: 4px; }
.m5 { margin-left: 5px; } .m6 { margin-left: 6px; } .m7 { margin-left: 7px; } .m8 { margin-left: 8px; }
.m9 { margin-left: 9px; } .m10 { margin-left: 10px; } .m11 { margin-left: 11px; } .m14 { margin-left: 14px; } .m39 { margin-left: 39px; }
.mn6 { margin-left: -6px; } .mn14 { margin-left: -14px; }

.work { display: flex; height: 815px; }
.left { flex: none; width: 1187px; display: flex; flex-direction: column; }
.canvas { display: block; flex: none; width: 1186px; height: 728px; background: #000; overflow: hidden; }

.orbit circle { fill: none; stroke: #c8c8c8; stroke-width: .9; }
.grn path { fill: none; stroke: #0f8a10; stroke-width: 1; }
.grn .thick { stroke: #0d8f0d; stroke-width: 2.2; }
.red path { fill: none; stroke: #c80818; stroke-width: 1; }
.axis circle { fill: none; stroke: #0a6a0a; stroke-width: .9; }
.lbl text { fill: #dcdcdc; font: 18px "Liberation Sans", sans-serif; }
.mark { fill: none; stroke: #e64444; stroke-width: 3; }

.panel { position: relative; flex: none; width: 272px; padding: 3px 0 0 1px; background: #fff; }
.ptitle {
  display: flex;
  align-items: center;
  width: 263px;
  height: 15px;
  border: 1px solid #888;
  border-radius: 2px;
  background: #efefef;
}
.pname { letter-spacing: 1px; font-size: 12.8px; line-height: 13px; flex: 1; color: #111; }
.pin { width: 6px; height: 9px; margin-right: 5px; border: 2px solid #222; border-bottom-width: 3px; border-top-width: 1px; }
.pclose { width: 19px; padding-left: 6px; font: 14px/13px "Liberation Sans", sans-serif; color: #444; }

.grid {
  width: 258px;
  margin: 2px 0 0 1px;
  table-layout: fixed;
  border-collapse: collapse;
  background: #fff;
}
.c0 { width: 21px; }
.c1 { width: 120px; }
.c2 { width: 117px; }
.grid th, .grid td { padding: 0; border: 1px solid #bdbdbd; height: 19px; font-weight: 400; overflow: hidden; white-space: nowrap; line-height: 14px; }
.grid th { height: 23px; background: linear-gradient(#fdfdfd, #e8e8e8); font-size: 12px; }
.grid th:first-child { background: #f4f4f4; }
.grid .hv { background: linear-gradient(#fbdf9f, #eeb058); color: #7a1030; }
.grid td:first-child { text-align: center; background: #f1f1f1; font: 11px/14px "Liberation Mono", monospace; letter-spacing: -.6px; color: #222; }
.grid .v { padding-left: 2px; }
.grid .v.p { padding-left: 5px; }
.a { font: 11px/14px "Liberation Mono", monospace; letter-spacing: -.6px; }
.phi { font: 12px/14px "Liberation Sans", sans-serif; margin: 0 1px 0 0; letter-spacing: 0; }
.k { position: relative; }
.k b { font-weight: 400; display: block; padding-top: 1px; }
.in0 { padding-left: 19px; }
.in1 { padding-left: 29px; }
.blue { color: #1414b4; }
.gr { color: #8a8a8a; padding-left: 2px !important; }
.box {
  display: inline-block;
  width: 12px;
  height: 12px;
  margin-right: 6px;
  border: 1px solid #999;
  background: #e8e8e8;
  color: #222;
  font: 12px/10px "Liberation Sans", sans-serif;
  text-align: center;
  vertical-align: -2px;
}
.sel td:first-child { background: #fbd698; }
.sel .k { background: #3f97f0; color: #fff; }
.sel .v { background: #deeaf8; }
.t::before { content: ""; position: absolute; left: 7px; top: -1px; bottom: -1px; width: 1px; background: #b0b0b0; }
.t.last::before { bottom: 9px; }
.t::after { content: ""; position: absolute; left: 8px; top: 9px; width: 16px; height: 1px; background: #b0b0b0; }

.thumb { position: absolute; left: 258px; top: 770px; width: 6px; height: 45px; background: linear-gradient(#c0651a 0 14px, #f09018 14px); border-radius: 2px 2px 0 0; }
.panel::after { content: ""; position: absolute; left: 264px; top: 3px; bottom: 0; width: 1px; background: #aaa; }
.panel::before { content: ""; position: absolute; left: 1px; top: 18px; bottom: 0; width: 1px; background: #aaa; }

.strip {
  position: absolute;
  left: 1452px;
  top: 20px;
  width: 7px;
  height: 105px;
  background: repeating-linear-gradient(#555 0 1px, #9a9a9a 1px 3px);
  opacity: .85;
}
.callout {
  position: absolute;
  left: 1184px;
  top: 491px;
  width: 204px;
  height: 57px;
  border: 3px solid #e64444;
}
```
